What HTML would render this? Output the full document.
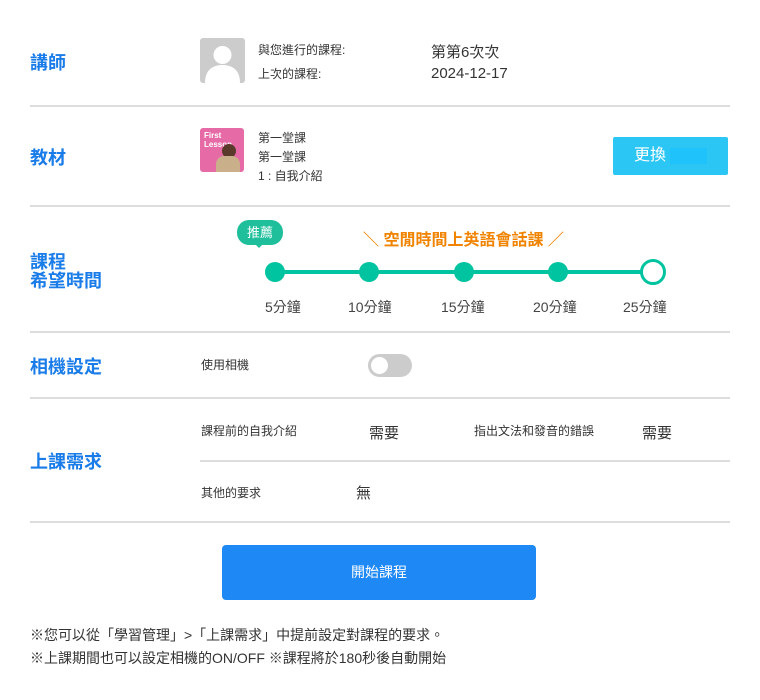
<!DOCTYPE html>
<html><head><meta charset="utf-8"><style>
*{margin:0;padding:0;box-sizing:border-box}
body{width:760px;height:700px;background:#fff;font-family:"Liberation Sans","Noto Sans CJK TC",sans-serif;color:#333;position:relative;overflow:hidden}
.a{position:absolute;white-space:nowrap}
.hr{position:absolute;height:2px;background:#ddd}
.lbl{position:absolute;color:#1a7ce8;font-weight:bold;font-size:18px;line-height:20px}
.s{font-size:12px;line-height:14px;color:#333}
.dot{position:absolute;width:20px;height:20px;border-radius:50%;background:#00c4a0;top:262px}
.tl{position:absolute;top:297px;font-size:14px;color:#444}
</style></head><body>
<div class="lbl" style="left:30px;top:53px">講師</div>
<div class="a" style="left:200px;top:38px;width:45px;height:45px;background:#ccc;border-radius:3px;overflow:hidden">
<svg width="45" height="45"><circle cx="22.5" cy="17" r="9" fill="#fff"/><path d="M5 45 C5 30 15 27 22.5 27 C30 27 40 30 40 45Z" fill="#fff"/></svg></div>
<div class="a s" style="left:258px;top:43px">與您進行的課程:</div>
<div class="a s" style="left:258px;top:67px">上次的課程:</div>
<div class="a" style="left:431px;top:41px;font-size:15px">第第6次次</div>
<div class="a" style="left:431px;top:65px;font-size:15px">2024-12-17</div>
<div class="hr" style="left:30px;width:700px;top:105px"></div>

<div class="lbl" style="left:30px;top:148px">教材</div>
<div class="a" style="left:200px;top:128px;width:44px;height:44px;background:#e66aa6;border-radius:3px;overflow:hidden;color:#fff;font-size:8px;font-weight:bold;line-height:9px;padding:3px 0 0 4px">First<br>Lesson
<div style="position:absolute;left:22px;top:16px;width:14px;height:14px;border-radius:50%;background:#5a3a2a"></div>
<div style="position:absolute;left:16px;top:28px;width:24px;height:20px;border-radius:8px 8px 0 0;background:#c9b08a"></div></div>
<div class="a s" style="left:258px;top:131px">第一堂課</div>
<div class="a s" style="left:258px;top:150px">第一堂課</div>
<div class="a s" style="left:258px;top:169px">1 : 自我介紹</div>
<div class="a" style="left:613px;top:137px;width:115px;height:38px;background:#2cc6f5;border-radius:2px"></div>
<div class="a" style="left:634px;top:146px;font-size:16px;line-height:20px;color:#fff">更換</div>
<div class="a" style="left:670px;top:148px;width:37px;height:16px;background:#1fc2fb"></div>
<div class="hr" style="left:30px;width:700px;top:205px"></div>

<div class="lbl" style="left:30px;top:253px;line-height:19px">課程<br>希望時間</div>
<div class="a" style="left:237px;top:220px;width:46px;height:25px;border-radius:12px;background:#1fbf9c;color:#fff;font-size:13px;text-align:center;line-height:25px">推薦</div>
<div class="a" style="left:254px;top:243px;width:0;height:0;border-left:5px solid transparent;border-right:5px solid transparent;border-top:5px solid #1fbf9c"></div>
<div class="a" style="left:363px;top:226px;font-size:16px;font-weight:bold;color:#f08300">＼ 空閒時間上英語會話課 ／</div>
<div class="a" style="left:275px;top:270px;width:378px;height:4px;background:#00c4a0"></div>
<div class="dot" style="left:265px"></div><div class="dot" style="left:359px"></div><div class="dot" style="left:454px"></div><div class="dot" style="left:548px"></div>
<div class="dot" style="left:640px;top:259px;width:26px;height:26px;background:#fff;border:3px solid #00c4a0"></div>
<div class="tl" style="left:265px">5分鐘</div><div class="tl" style="left:348px">10分鐘</div><div class="tl" style="left:441px">15分鐘</div><div class="tl" style="left:533px">20分鐘</div><div class="tl" style="left:623px">25分鐘</div>
<div class="hr" style="left:30px;width:700px;top:331px"></div>

<div class="lbl" style="left:30px;top:357px">相機設定</div>
<div class="a s" style="left:201px;top:358px">使用相機</div>
<div class="a" style="left:368px;top:354px;width:44px;height:23px;border-radius:12px;background:#ccc"></div>
<div class="a" style="left:371px;top:357px;width:17px;height:17px;border-radius:50%;background:#fff"></div>
<div class="hr" style="left:30px;width:700px;top:397px"></div>

<div class="lbl" style="left:30px;top:452px">上課需求</div>
<div class="a s" style="left:201px;top:424px">課程前的自我介紹</div>
<div class="a" style="left:369px;top:422px;font-size:15px">需要</div>
<div class="a s" style="left:474px;top:424px">指出文法和發音的錯誤</div>
<div class="a" style="left:642px;top:422px;font-size:15px">需要</div>
<div class="hr" style="left:200px;width:530px;top:460px"></div>
<div class="a s" style="left:201px;top:486px">其他的要求</div>
<div class="a" style="left:356px;top:482px;font-size:15px">無</div>
<div class="hr" style="left:30px;width:700px;top:521px"></div>

<div class="a" style="left:222px;top:545px;width:314px;height:55px;background:#1e88f5;border-radius:4px;color:#fff;font-size:14px;text-align:center;line-height:55px">開始課程</div>
<div class="a" style="left:30px;top:625px;font-size:14px;color:#333">※您可以從「學習管理」>「上課需求」中提前設定對課程的要求。</div>
<div class="a" style="left:30px;top:648px;font-size:14px;color:#333">※上課期間也可以設定相機的ON/OFF ※課程將於180秒後自動開始</div>
</body></html>
